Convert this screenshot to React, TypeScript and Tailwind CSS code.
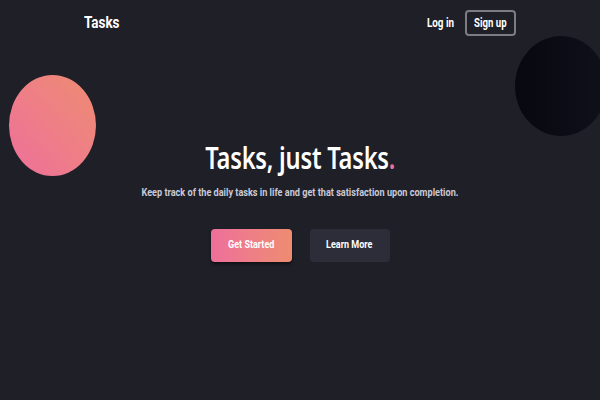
import React from "react";

export default function App() {
  const cond = { fontFamily: '"Roboto", sans-serif' };
  return (
    <div className="relative w-[600px] h-[400px] overflow-hidden bg-[#1f1f28] text-white">
      <div className="absolute left-[9px] top-[75px] w-[87px] h-[101px] rounded-[50%] bg-gradient-to-tr from-[#ee6f9a] to-[#ee8c70]" />
      <div className="absolute left-[515px] top-[36px] w-[92px] h-[100px] rounded-[50%] bg-gradient-to-r from-[#08080f] to-[#10101b]" />
      <header className="relative w-[432px] mx-auto flex items-center justify-between pt-[10px]">
        <span className="inline-block origin-left scale-x-[0.84] text-[16px] font-bold" style={cond}>Tasks</span>
        <div className="flex items-center gap-[11px]">
          <span className="inline-block origin-right scale-x-[0.82] text-[12px] font-bold" style={cond}>Log in</span>
          <button className="w-[51px] h-[26px] rounded-[4px] border-2 border-[#7c7c84] flex items-center justify-center">
            <span className="inline-block scale-x-[0.8] text-[12px] font-bold whitespace-nowrap" style={cond}>Sign up</span>
          </button>
        </div>
      </header>
      <main className="relative flex flex-col items-center pt-[104px]">
        <h1 className="inline-block scale-x-[0.79] text-[30px] font-semibold leading-[36px] tracking-[-0.3px] whitespace-nowrap" style={{ fontFamily: '"Noto Sans", sans-serif' }}>
          Tasks, just Tasks<span className="text-[#ee6f9a]">.</span>
        </h1>
        <p className="mt-[9px] inline-block scale-x-[0.83] text-[11px] leading-[15px] font-bold text-[#c9c9d6] whitespace-nowrap" style={cond}>
          Keep track of the daily tasks in life and get that satisfaction upon completion.
        </p>
        <div className="mt-[29px] flex gap-[18px]">
          <button className="w-[81px] h-[33px] rounded-[4px] bg-gradient-to-r from-[#ee6f9a] to-[#ee8c70] shadow-[0_2px_3px_rgba(0,0,0,0.5)] flex items-center justify-center">
            <span className="inline-block scale-x-[0.82] text-[11px] font-bold whitespace-nowrap" style={cond}>Get Started</span>
          </button>
          <button className="w-[80px] h-[33px] rounded-[4px] bg-[#2d2d3a] flex items-center justify-center">
            <span className="inline-block scale-x-[0.82] text-[11px] font-bold whitespace-nowrap" style={cond}>Learn More</span>
          </button>
        </div>
      </main>
    </div>
  );
}
